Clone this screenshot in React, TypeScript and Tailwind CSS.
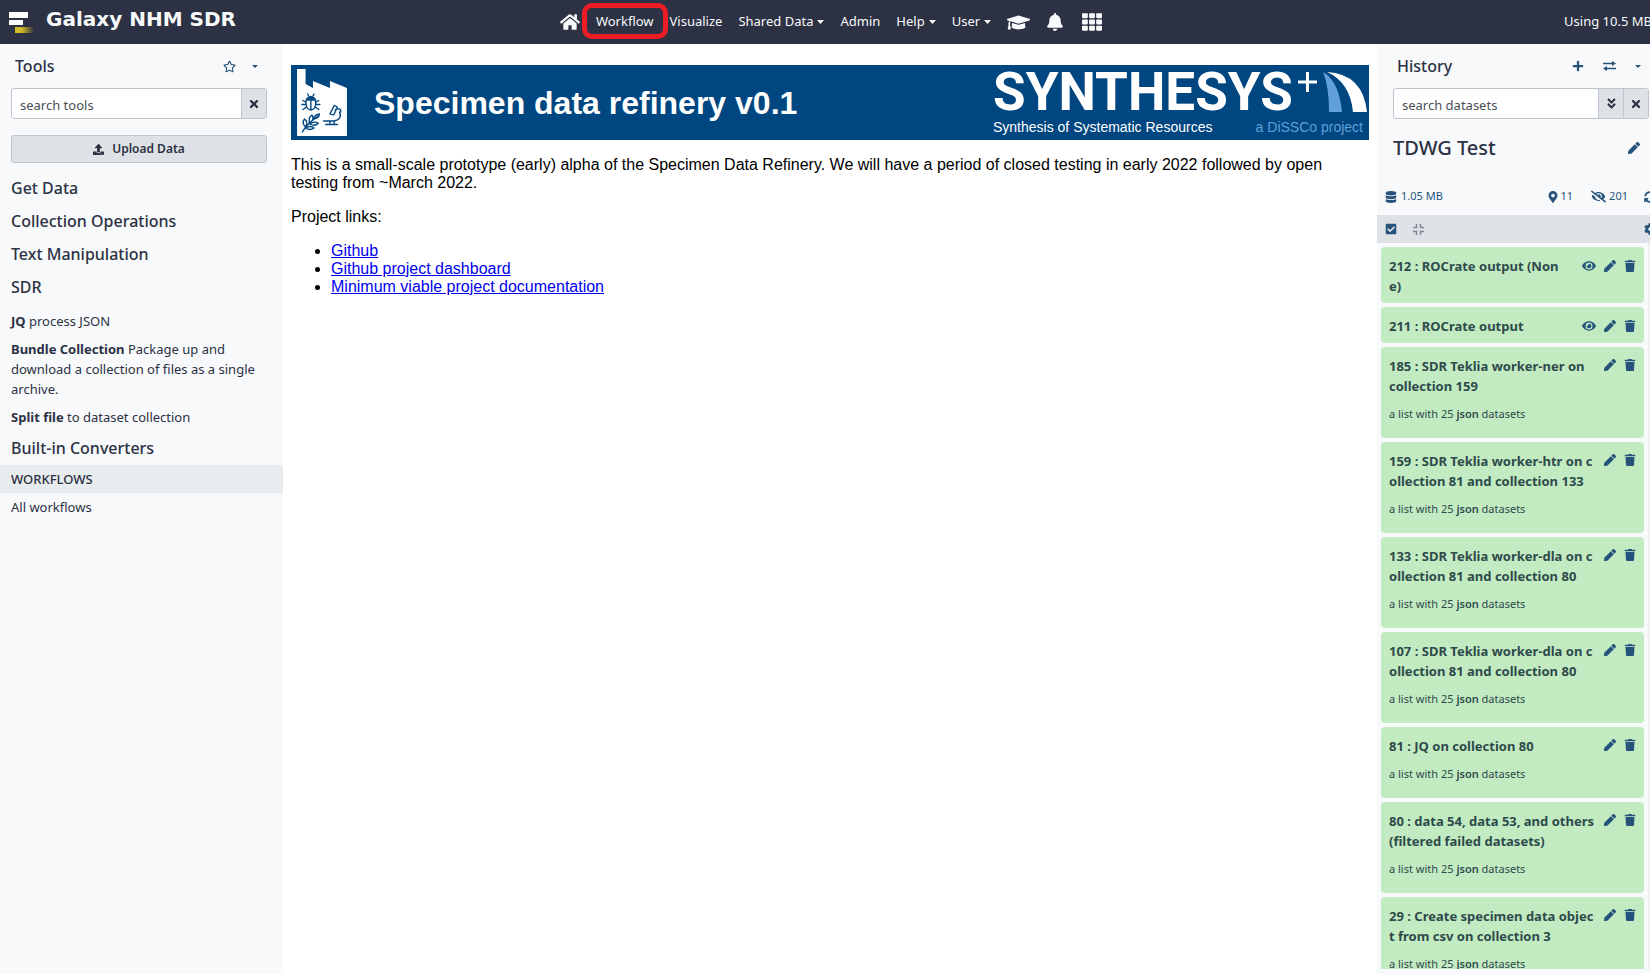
import React from "react";
import {
  FaHome, FaGraduationCap, FaBell, FaTh, FaRegStar, FaTimes, FaUpload, FaPlus,
  FaAngleDoubleDown, FaPen, FaDatabase, FaMapMarkerAlt, FaEyeSlash, FaSyncAlt, FaCheckSquare, FaCog, FaEye, FaTrash,
} from "react-icons/fa";

const navItem = "flex h-9 items-center whitespace-nowrap";
const toolSection = "block h-[33px] px-[11px] text-base leading-[33px] font-medium";
const toolLink = "block py-1 pr-5 pl-[11px] text-[13px] leading-5";
const iconButton = "flex items-center justify-center text-[#25537b]";
const addon = "flex w-[25px] shrink-0 items-center justify-center border-l border-[#bdc6d0] bg-[#dee2e6]";
const searchBox = "flex h-[31px] overflow-hidden rounded-[3px] border border-[#bdc6d0] bg-white";
const searchInput = "min-w-0 flex-1 bg-transparent px-2 pt-1 text-[13px] outline-none placeholder:text-[#495057] placeholder:opacity-100";

type Item = { id: number; lines: string[]; list?: boolean };

const items: Item[] = [
  { id: 212, lines: ["ROCrate output (Non", "e)"] },
  { id: 211, lines: ["ROCrate output"] },
  { id: 185, lines: ["SDR Teklia worker-ner on", "collection 159"], list: true },
  { id: 159, lines: ["SDR Teklia worker-htr on c", "ollection 81 and collection 133"], list: true },
  { id: 133, lines: ["SDR Teklia worker-dla on c", "ollection 81 and collection 80"], list: true },
  { id: 107, lines: ["SDR Teklia worker-dla on c", "ollection 81 and collection 80"], list: true },
  { id: 81, lines: ["JQ on collection 80"], list: true },
  { id: 80, lines: ["data 54, data 53, and others", "(filtered failed datasets)"], list: true },
  { id: 29, lines: ["Create specimen data objec", "t from csv on collection 3"], list: true },
];

function Caret({ small = false }: { small?: boolean }) {
  return (
    <svg className={small ? "h-[3px] w-1.5" : "ml-1 h-1 w-[7px]"} viewBox="0 0 8 4" preserveAspectRatio="none" aria-hidden="true">
      <path fill="currentColor" d="M0 0h8L4 4z" />
    </svg>
  );
}

function SwitchArrows() {
  return (
    <svg className="h-[10px] w-[13px]" viewBox="0 0 13 10" aria-hidden="true">
      <path fill="none" stroke="currentColor" strokeWidth="1.5" d="M0 2.5h10M3 7.5h10" />
      <path fill="currentColor" d="M9 0l4 2.5L9 5zM4 5L0 7.5 4 10z" />
    </svg>
  );
}

function Collapse() {
  return (
    <svg className="h-[11px] w-[11px] text-[#7f8596]" viewBox="0 0 11 11" aria-hidden="true">
      <path fill="none" stroke="currentColor" strokeWidth="1.5" d="M3.5 0v3.5H0M7.5 0v3.5H11M3.5 11V7.5H0M7.5 11V7.5H11" />
    </svg>
  );
}

function BrandMark() {
  return (
    <svg className="h-[21px] w-[25px] shrink-0" viewBox="0 0 25 21" aria-hidden="true">
      <defs>
        <linearGradient id="gold">
          <stop offset="0" stopColor="#d9c02a" />
          <stop offset=".35" stopColor="#d0b82b" />
          <stop offset="1" stopColor="#d9c02a" stopOpacity="0" />
        </linearGradient>
      </defs>
      <path fill="#fff" d="M0 0h19v6H0zM0 8h14v5H0z" />
      <path fill="url(#gold)" d="M6 15h19v6H6z" />
    </svg>
  );
}

function Factory() {
  return (
    <svg className="ml-[5px] h-[67px] w-[52px] shrink-0" viewBox="0 0 49 67" preserveAspectRatio="none" aria-hidden="true">
      <path fill="#fff" d="M1 0h8v15l7 4v-7l16 7v-7l16 7v48H1z" />
      <g fill="none" stroke="#004680" strokeWidth="1.3" strokeLinecap="round" strokeLinejoin="round">
        <path fill="#004680" d="M10 30q4-5 8 0z" />
        <path d="M14 31v10M9.500 31h9v4.500q-.5 5-4.500 5.500-4-.5-4.500-5.500zM12 27l-1-2M16 27l1-2M9 33l-2.500-1.500M19 33l2.500-1.500M9 35.500H5.500M19 35.500h3.500M10 38l-3.500 2.500M18 38l3.500 2.500" />
        <path d="M6 63q4-8 15-16M9 58q-4-4-1-8 4 3 1 8zM13 54q-2-5 2-8 3 4-2 8zM17 50q0-4 5-5 0 4-5 5zM9 59q5-3 8 0-4 3-8 0zM13 55q4-3 8-1-3 4-8 1z" />
        <path d="M26 52h10M28 55.500h11M32 52v3M36 52v3M32 45l4-8.500 3 1.500-3.500 8zM37 41q1-2 3-1 3 0 2 3M41 43q3 7-5 9" />
      </g>
    </svg>
  );
}

function Synthesys() {
  return (
    <div className="flex h-[75px] w-[376px] shrink-0 flex-col text-white">
      <div className="flex items-start gap-[5px]">
        <span className="flex-1 font-['Roboto',sans-serif] text-[53px] leading-[54px] font-bold">SYNTHESYS</span>
        <svg className="mt-[7px] mr-2 h-10 w-[69px] shrink-0" viewBox="0 0 69 40" aria-hidden="true">
          <path fill="#fff" d="M0 8.500h8V0h3v8.500h8v3h-8V20H8v-8.500H0z" />
          <path fill="#609fda" d="M25 0q16 9 19 40H31q0-26-6-40z" />
          <path fill="#fff" d="M29 0q36 2 40 40H55Q52 10 29 0z" />
        </svg>
      </div>
      <div className="flex justify-between pr-1.5 text-[14px] leading-4">
        <span>Synthesis of Systematic Resources</span>
        <span className="text-[#609fda]">a DiSSCo project</span>
      </div>
    </div>
  );
}

function HistoryItem({ item }: { item: Item }) {
  return (
    <li className="shrink-0 rounded bg-[#c2ebc2] px-2 pt-2 text-[#2f4a4a]">
      <div className="flex items-start justify-between">
        <h3 className="min-w-0 pt-px text-[13px] leading-5 font-bold whitespace-nowrap">
          {item.id} : {item.lines[0]}
          {item.lines[1] && <><br />{item.lines[1]}</>}
        </h3>
        <div className="flex shrink-0 gap-2 pt-1">
          {!item.list && <button aria-label="Display" className={iconButton}><FaEye size={14} /></button>}
          <button aria-label="Edit" className={iconButton}><FaPen size={12} /></button>
          <button aria-label="Delete" className={iconButton}><FaTrash size={12} /></button>
        </div>
      </div>
      {item.list
        ? <p className="pt-2 pb-[14px] text-[11px] leading-5">a list with 25 <b className="font-semibold">json</b> datasets</p>
        : <div className="h-[7px]" />}
    </li>
  );
}

function Header() {
  return (
    <header className="grid h-11 shrink-0 grid-cols-[1fr_auto_1fr] items-center bg-[#2c3143] text-[#f8f9fa]">
      <a href="#home" className="flex items-center gap-3 pl-[9px]">
        <BrandMark />
        <span className="pb-1.5 font-['DejaVu_Sans',sans-serif] text-xl leading-7 font-bold">Galaxy NHM SDR</span>
      </a>
      <nav className="flex items-center gap-4 pl-3">
        <a href="#start" aria-label="Home" className={navItem}><FaHome size={20} /></a>
        <a href="#workflow" className={`${navItem} relative`}>
          Workflow
          <span className="absolute -inset-x-[14px] -top-px bottom-px rounded-[10px] border-[5px] border-[#ed1c24]" />
        </a>
        <a href="#visualize" className={navItem}>Visualize</a>
        <a href="#shared" className={navItem}>Shared Data<Caret /></a>
        <a href="#admin" className={navItem}>Admin</a>
        <a href="#help" className={navItem}>Help<Caret /></a>
        <a href="#user" className={navItem}>User<Caret /></a>
        <a href="#learn" aria-label="Tutorials" className={navItem}><FaGraduationCap size={23} /></a>
        <a href="#alerts" aria-label="Notifications" className={navItem}><FaBell size={18} /></a>
        <a href="#apps" aria-label="Apps" className={`${navItem} pl-0.5`}><FaTh size={20} /></a>
      </nav>
      <span className="-mr-0.5 justify-self-end whitespace-nowrap">Using 10.5 MB</span>
    </header>
  );
}

function ToolPanel() {
  return (
    <aside className="w-[283px] shrink-0 overflow-hidden bg-[#f8f9fb]">
      <div className="flex h-11 items-center pr-[14px] pl-[15px]">
        <h2 className="flex-1 text-base font-medium">Tools</h2>
        <button aria-label="Favorites" className={`${iconButton} h-7 w-6`}><FaRegStar size={13} /></button>
        <button aria-label="Tool options" className={`${iconButton} h-7 w-7`}><Caret small /></button>
      </div>
      <div className="pr-4 pl-[11px]">
        <div className={searchBox}>
          <input aria-label="Search tools" placeholder="search tools" className={searchInput} />
          <button aria-label="Clear tool search" className={addon}><FaTimes size={12} /></button>
        </div>
        <button className="mt-4 flex h-7 w-full items-center justify-center gap-2 rounded-[3px] border border-[#bdc6d0] bg-[#dee2e6] text-xs font-semibold">
          <FaUpload size={11} />Upload Data
        </button>
      </div>
      <nav className="mt-[9px]">
        <a href="#get-data" className={toolSection}>Get Data</a>
        <a href="#collections" className={toolSection}>Collection Operations</a>
        <a href="#text" className={toolSection}>Text Manipulation</a>
        <a href="#sdr" className={toolSection}>SDR</a>
        <div className="pt-[3px] pb-px">
          <a href="#jq" className={toolLink}><b>JQ</b> process JSON</a>
          <a href="#bundle" className={toolLink}><b>Bundle Collection</b> Package up and download a collection of files as a single archive.</a>
          <a href="#split" className={toolLink}><b>Split file</b> to dataset collection</a>
        </div>
        <a href="#converters" className={toolSection}>Built-in Converters</a>
        <h3 className="h-7 bg-[#e9ecef] px-[11px] text-[13px] leading-7 font-medium">WORKFLOWS</h3>
        <a href="#all" className={toolLink}>All workflows</a>
      </nav>
    </aside>
  );
}

function Welcome() {
  return (
    <main className="min-w-0 flex-1 px-2 pt-[21px] font-['Liberation_Sans',sans-serif] text-base leading-[18px] text-black">
      <div className="flex h-[75px] items-center bg-[#004680]">
        <Factory />
        <h1 className="flex-1 pl-[26px] text-[32px] leading-9 font-bold text-white">Specimen data refinery v0.1</h1>
        <Synthesys />
      </div>
      <p className="mt-4">This is a small-scale prototype (early) alpha of the Specimen Data Refinery. We will have a period of closed testing in early 2022 followed by open testing from ~March 2022.</p>
      <p className="mt-4">Project links:</p>
      <ul className="mt-4 list-disc pl-10">
        <li><a href="#github" className="text-[#0000ee] underline">Github</a></li>
        <li><a href="#dashboard" className="text-[#0000ee] underline">Github project dashboard</a></li>
        <li><a href="#docs" className="text-[#0000ee] underline">Minimum viable project documentation</a></li>
      </ul>
    </main>
  );
}

function HistoryPanel() {
  return (
    <aside className="flex w-[273px] shrink-0 flex-col overflow-hidden bg-[#f8f9fb] pb-[5px]">
      <div className="-mr-0.5 flex h-11 shrink-0 items-center pl-5">
        <h2 className="flex-1 text-base font-medium">History</h2>
        <button aria-label="New history" className={`${iconButton} h-7 w-8`}><FaPlus size={12} /></button>
        <button aria-label="Switch history" className={`${iconButton} h-7 w-[30px]`}><SwitchArrows /></button>
        <button aria-label="History options" className={`${iconButton} h-7 w-7`}><Caret small /></button>
      </div>
      <div className="shrink-0 pr-px pl-4">
        <div className={searchBox}>
          <input aria-label="Search datasets" placeholder="search datasets" className={searchInput} />
          <button aria-label="Advanced search" className={addon}><FaAngleDoubleDown size={13} /></button>
          <button aria-label="Clear dataset search" className={addon}><FaTimes size={12} /></button>
        </div>
      </div>
      <div className="flex h-[58px] shrink-0 items-center justify-between pr-2.5 pl-4">
        <h2 className="text-xl font-medium">TDWG Test</h2>
        <button aria-label="Rename history" className={iconButton}><FaPen size={12} /></button>
      </div>
      <div className="-mr-1.5 flex h-[38px] shrink-0 items-center pt-px pl-2 text-[11px] text-[#25537b]">
        <span className="flex flex-1 items-center gap-1"><FaDatabase size={12} />1.05 MB</span>
        <span className="flex items-center gap-0.5"><FaMapMarkerAlt size={12} />11</span>
        <span className="ml-[18px] flex items-center gap-[3px]"><FaEyeSlash size={15} />201</span>
        <button aria-label="Refresh" className="ml-4"><FaSyncAlt size={12} /></button>
      </div>
      <div className="-mr-1.5 flex h-7 shrink-0 items-center bg-[#dee2e6] pl-2 text-[#25537b]">
        <button aria-label="Select items"><FaCheckSquare size={12} /></button>
        <button aria-label="Collapse items" className="ml-4 flex-1"><Collapse /></button>
        <button aria-label="Settings"><FaCog size={12} /></button>
      </div>
      <ul className="flex min-h-0 flex-1 flex-col gap-1 overflow-hidden border-r-2 border-[#eeeff1] px-1 pt-1">
        {items.map((item) => <HistoryItem key={item.id} item={item} />)}
      </ul>
    </aside>
  );
}

export default function App() {
  return (
    <div className="flex h-screen flex-col overflow-hidden bg-white font-['Noto_Sans',sans-serif] text-[13px] text-[#2c3143]">
      <Header />
      <div className="flex min-h-0 flex-1">
        <ToolPanel />
        <Welcome />
        <HistoryPanel />
      </div>
    </div>
  );
}
